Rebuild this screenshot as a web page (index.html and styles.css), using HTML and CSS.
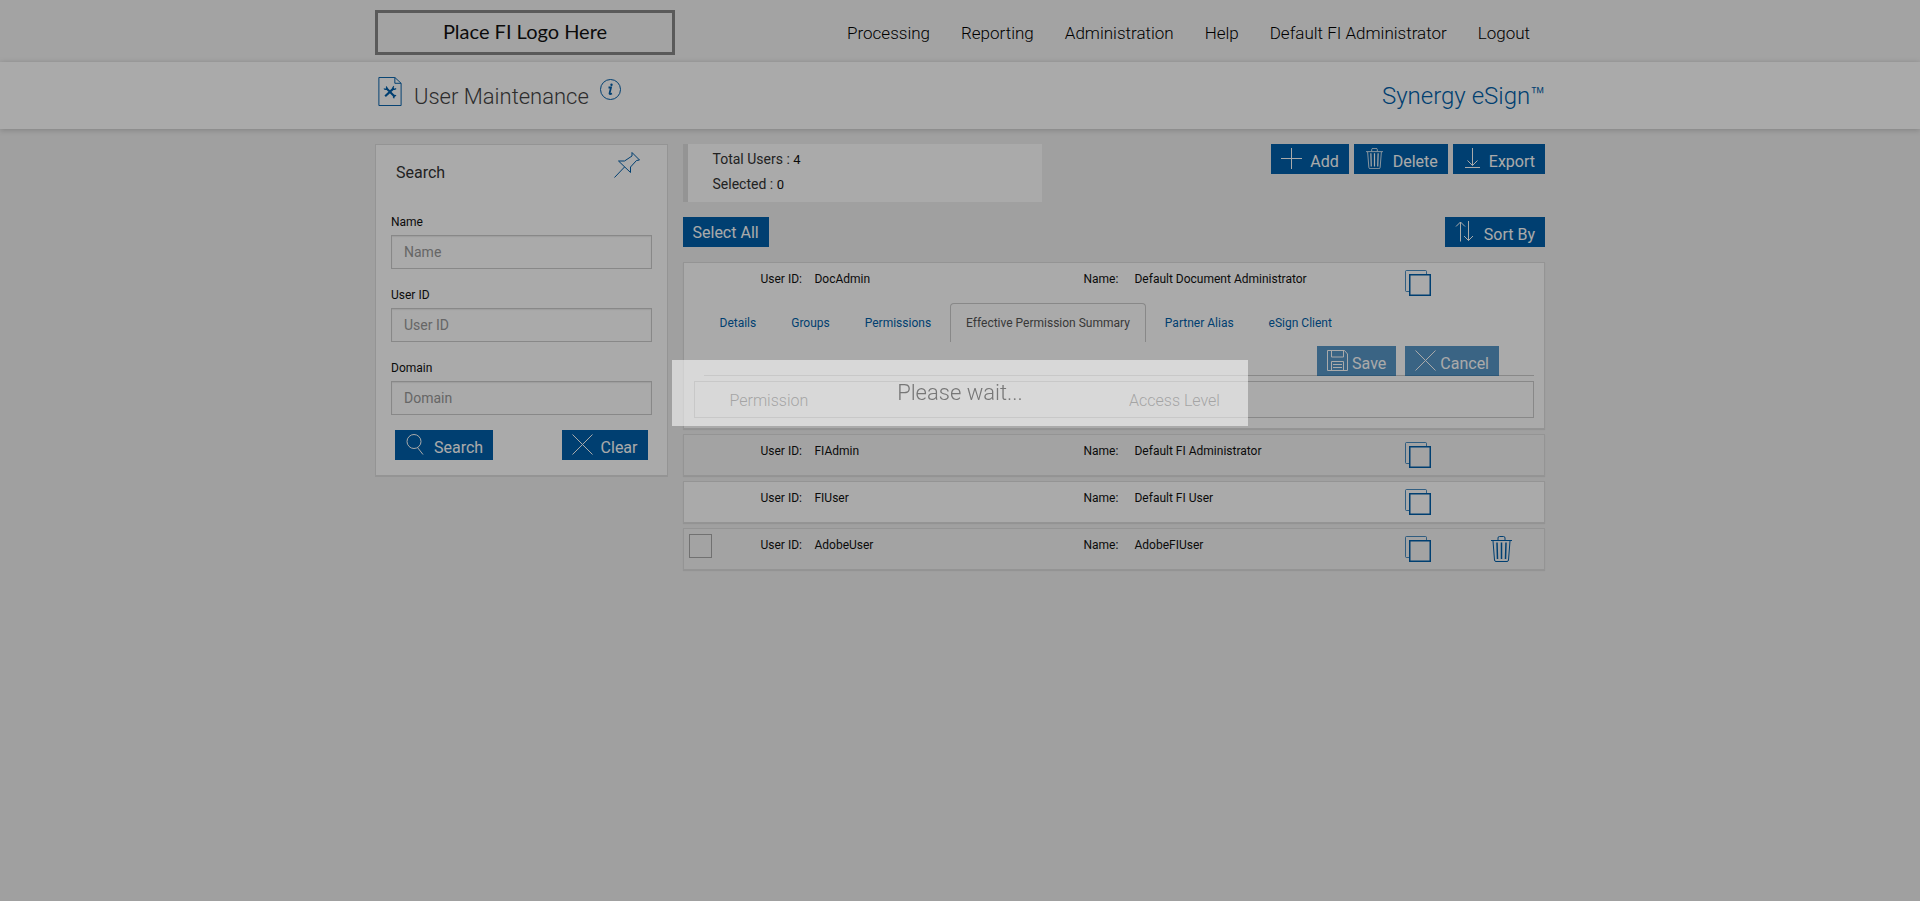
FILE: index.html
```html
<!DOCTYPE html>
<html lang="en">
<head>
    <meta charset="UTF-8">
    <title>User Maintenance</title>
    <link rel="stylesheet" href="styles.css">
</head>
<body>
    <!-- shared icons -->
    <svg class="sprite" aria-hidden="true">
        <symbol id="i-copy" viewBox="0 0 26 26">
            <path d="M4.500 21.500H1.500Q.5 21.500 .5 20.500V1.500Q.5 .5 1.500 .5H20.500Q21.500 .5 21.500 1.500V4" stroke-width="1" opacity=".7"/>
            <rect x="4.750" y="4.750" width="20.500" height="20.500" stroke-width="1.500"/>
        </symbol>
        <symbol id="i-trash" viewBox="0 0 21 26">
            <path d="M0 4.500H21M7 4V2Q7 .5 8.500 .5H12.500Q14 .5 14 2V4M2 5L3.500 24Q3.600 25.500 5 25.500H16Q17.400 25.500 17.500 24L19 5"/>
            <path d="M6 6.500L6.500 23M10.500 6.500V23M15 6.500L14.500 23" stroke-width="1.500"/>
        </symbol>
        <symbol id="i-close" viewBox="0 0 21 21">
            <path d="M.5 .5L20.500 20.500M20.500 .5L.5 20.500"/>
        </symbol>
    </svg>

    <header class="topbar">
        <div class="container topbar-inner">
            <div class="logo">Place FI Logo Here</div>
            <nav class="menu">
                <a href="#">Processing</a>
                <a href="#">Reporting</a>
                <a href="#">Administration</a>
                <a href="#">Help</a>
                <a href="#">Default FI Administrator</a>
                <a href="#">Logout</a>
            </nav>
        </div>
    </header>

    <div class="titlebar">
        <div class="container titlebar-inner">
            <svg class="icon doc-icon" viewBox="0 0 24 30">
                <path d="M.5 .5H17L23.500 6.500V29.500H.5ZM17 .5V6.500H23.500"/>
                <path d="M8 11.500L17 20.500M16 11.500L7 20" stroke-width="2.200"/>
                <path d="M5.800 11.800Q6.500 13.200 8.500 12.800Q9.300 11 8 9.800M18.300 12Q16.500 13.500 15 12.300Q14.600 10.500 16 9.500M18.300 19.500Q17 18.500 15.800 19.500Q15 21 16.500 22" stroke-width="1.300"/>
            </svg>
            <h1>User Maintenance</h1>
            <svg class="icon info-icon" viewBox="0 0 21 21">
                <circle cx="10.500" cy="10.500" r="10"/>
                <path d="M8.500 8.500H11L9.500 14.500Q9.500 15.500 12 14.500" stroke-width="1.800"/>
                <circle cx="11.500" cy="5.700" r=".6" stroke-width="1.200"/>
            </svg>
            <div class="product">Synergy eSign™</div>
        </div>
    </div>

    <main class="container page">
        <form class="search-panel">
            <div class="search-head">
                <h2>Search</h2>
                <svg class="icon pin-icon" viewBox="0 0 26 26">
                    <path d="M18 .5L25.500 8L22.500 8.500L16.500 15L16.500 20.500L4.500 9L10.500 9L18 4ZM10.500 15L.5 25.500"/>
                </svg>
            </div>
            <label for="name">Name</label>
            <input type="text" id="name" placeholder="Name">
            <label for="userid">User ID</label>
            <input type="text" id="userid" placeholder="User ID">
            <label for="domain">Domain</label>
            <input type="text" id="domain" placeholder="Domain">
            <div class="search-buttons">
                <button type="button" class="btn">
                    <svg viewBox="0 0 21 21"><circle cx="9" cy="7.500" r="7"/><path d="M12.500 13.500L18 20.500"/></svg>
                    <span>Search</span>
                </button>
                <button type="button" class="btn">
                    <svg viewBox="0 0 21 21"><use href="#i-close"/></svg>
                    <span>Clear</span>
                </button>
            </div>
        </form>

        <section class="content">
            <div class="toolbar">
                <div class="totals">
                    <p>Total Users : <span>4</span></p>
                    <p>Selected : <span>0</span></p>
                </div>
                <div class="actions">
                    <button type="button" class="btn">
                        <svg viewBox="0 0 21 21"><path d="M0 10.500H21M10.500 0V21"/></svg>
                        <span>Add</span>
                    </button>
                    <button type="button" class="btn">
                        <svg viewBox="0 0 21 21"><use href="#i-trash"/></svg>
                        <span>Delete</span>
                    </button>
                    <button type="button" class="btn btn-export">
                        <svg viewBox="0 0 18 21"><path d="M9.500 0V17.500M4.500 12.500L9.500 17.500L14.500 12.500M2 19.500H17"/></svg>
                        <span>Export</span>
                    </button>
                </div>
            </div>
            <div class="toolbar">
                <button type="button" class="btn btn-text">Select All</button>
                <button type="button" class="btn">
                    <svg viewBox="0 0 21 21"><path d="M5.500 20.500V1M1 5.500L5.500 1L10 5.500M13.500 0V19.500M9 15L13.500 19.500L18 15"/></svg>
                    <span>Sort By</span>
                </button>
            </div>

            <div class="user open">
                <div class="user-row">
                    <div class="cell-check"></div>
                    <div class="cell-id"><span>User ID:</span> DocAdmin</div>
                    <div class="cell-name"><span>Name:</span> Default Document Administrator</div>
                    <div class="cell-copy"><svg class="icon copy"><use href="#i-copy"/></svg></div>
                    <div class="cell-del"></div>
                </div>
                <div class="tabs">
                    <a href="#">Details</a>
                    <a href="#">Groups</a>
                    <a href="#">Permissions</a>
                    <a href="#" class="active">Effective Permission Summary</a>
                    <a href="#">Partner Alias</a>
                    <a href="#">eSign Client</a>
                </div>
                <div class="tab-buttons">
                    <button type="button" class="btn btn-tight" disabled>
                        <svg viewBox="0 0 21 21"><path d="M.5 .5H17.500L20.500 4V20.500H.5ZM4.500 .5V7H16.500V.5M4.500 20.500V11.500H16.500V20.500M6 14.500H15M6 17.500H15"/></svg>
                        <span>Save</span>
                    </button>
                    <button type="button" class="btn btn-tight" disabled>
                        <svg viewBox="0 0 21 21"><use href="#i-close"/></svg>
                        <span>Cancel</span>
                    </button>
                </div>
                <table class="permissions">
                    <tr>
                        <th>Permission</th>
                        <th>Access Level</th>
                    </tr>
                </table>
            </div>
            <div class="user alt">
                <div class="user-row">
                    <div class="cell-check"></div>
                    <div class="cell-id"><span>User ID:</span> FIAdmin</div>
                    <div class="cell-name"><span>Name:</span> Default FI Administrator</div>
                    <div class="cell-copy"><svg class="icon copy"><use href="#i-copy"/></svg></div>
                    <div class="cell-del"></div>
                </div>
            </div>
            <div class="user">
                <div class="user-row">
                    <div class="cell-check"></div>
                    <div class="cell-id"><span>User ID:</span> FIUser</div>
                    <div class="cell-name"><span>Name:</span> Default FI User</div>
                    <div class="cell-copy"><svg class="icon copy"><use href="#i-copy"/></svg></div>
                    <div class="cell-del"></div>
                </div>
            </div>
            <div class="user alt">
                <div class="user-row">
                    <div class="cell-check"><input type="checkbox" aria-label="Select AdobeUser"></div>
                    <div class="cell-id"><span>User ID:</span> AdobeUser</div>
                    <div class="cell-name"><span>Name:</span> AdobeFIUser</div>
                    <div class="cell-copy"><svg class="icon copy"><use href="#i-copy"/></svg></div>
                    <div class="cell-del"><svg class="icon trash"><use href="#i-trash"/></svg></div>
                </div>
            </div>
        </section>
    </main>

    <div class="overlay"></div>
    <div class="wait" role="status">Please wait...</div>
</body>
</html>
```

FILE: styles.css
```css
* {
    box-sizing: border-box;
}
body {
    margin: 0;
    background-color: #f0f0f0;
    color: #111;
    font-family: Roboto, Arial, sans-serif;
    font-size: 12px;
    line-height: 18px;
}
h1, h2, p {
    margin: 0;
}
a {
    text-decoration: none;
}
.sprite {
    display: none;
}
.container {
    max-width: 1170px;
    margin: 0 auto;
}
.icon {
    fill: none;
    stroke: #005faa;
    stroke-width: 1;
    flex: none;
}

/* header */
.topbar {
    background-color: #f5f5f5;
}
.topbar-inner {
    display: flex;
    justify-content: space-between;
    align-items: flex-start;
    height: 62px;
    padding-top: 10px;
}
.logo {
    width: 300px;
    height: 45px;
    border: 3px solid #888;
    font-family: Lato, sans-serif;
    font-size: 20px;
    line-height: 36px;
    text-align: center;
}
.menu {
    display: flex;
    gap: 31px;
    padding: 12px 15px 0 0;
}
.menu a {
    color: #000;
    font-size: 17px;
    line-height: 22px;
    font-weight: 300;
}
.titlebar {
    background-color: #fff;
    box-shadow: 0 1px 6px rgba(0,0,0,0.2);
}
.titlebar-inner {
    display: flex;
    align-items: flex-start;
    height: 67px;
    padding: 15px 0 0 3px;
}
.doc-icon {
    width: 24px;
    height: 29px;
}
.titlebar h1, .product {
    padding-top: 4px;
    font-size: 24px;
    line-height: 30px;
    font-weight: 300;
}
.titlebar h1 {
    margin: 0 11px 0 12px;
    color: #444;
    font-size: 22px;
    line-height: 32px;
}
.info-icon {
    width: 21px;
    height: 21px;
    margin-top: 2px;
}
.product {
    margin-left: auto;
    color: #005faa;
}

/* buttons */
.btn {
    display: flex;
    align-items: flex-start;
    gap: 8px;
    height: 30px;
    padding: 4px 10px;
    border: 0;
    background-color: #005faa;
    color: #fff;
    font-family: inherit;
    font-size: 16px;
    line-height: 22px;
}
.btn svg {
    width: 21px;
    height: 21px;
    fill: none;
    stroke: #fff;
    stroke-width: 1;
}
.btn span {
    padding-top: 3px;
}
.btn-text {
    line-height: 24px;
}
.btn-export svg {
    width: 18px;
}
.btn-tight {
    gap: 4px;
}
.btn:disabled {
    opacity: 0.65;
}

/* search */
.page {
    display: flex;
    align-items: flex-start;
    gap: 15px;
    padding-top: 15px;
}
.search-panel {
    width: 25%;
    padding: 7px 15px 15px;
    border: 1px solid #dedede;
    border-bottom-width: 2px;
    background-color: #fff;
}
.search-head {
    display: flex;
    justify-content: space-between;
    height: 59px;
    padding: 0 12px 0 5px;
}
.search-head h2 {
    padding-top: 10px;
    font-size: 16px;
    line-height: 22px;
    font-weight: 400;
    color: #333;
}
.pin-icon {
    width: 26px;
    height: 26px;
}
.search-panel label {
    display: block;
    margin-bottom: 4px;
    padding-top: 2px;
}
.search-panel input {
    display: block;
    width: 100%;
    height: 34px;
    margin-bottom: 15px;
    padding: 6px 12px;
    border: 1px solid #ccc;
    background-color: #fff;
    box-shadow: inset 0 1px 1px rgba(0,0,0,0.08);
    font-family: inherit;
    font-size: 14px;
}
.search-panel input::placeholder {
    color: #999;
}
.search-buttons {
    display: flex;
    justify-content: space-between;
    padding: 0 4px;
}

/* user list */
.content {
    flex: 1;
}
.toolbar {
    display: flex;
    justify-content: space-between;
    align-items: flex-start;
    margin-bottom: 15px;
}
.totals {
    width: 359px;
    height: 58px;
    padding: 3px 25px;
    border-left: 5px solid #dedede;
    background-color: #fff;
    color: #333;
    font-size: 14px;
    line-height: 24px;
}
.totals span {
    font-size: 13px;
    color: #111;
}
.actions {
    display: flex;
    gap: 5px;
}
.user {
    margin-bottom: 5px;
    border: 1px solid #dedede;
    background-color: #fff;
    box-shadow: 0 1px 1px rgba(0,0,0,0.08);
}
.user.alt {
    background-color: #f5f5f5;
}
.user-row {
    display: flex;
    align-items: flex-start;
    height: 40px;
    padding: 7px 0 0 5px;
}
.cell-check {
    width: 72px;
}
.cell-check input {
    appearance: none;
    display: block;
    width: 23px;
    height: 24px;
    margin: -2px 0 0;
    border: 1px solid #aaa;
}
.cell-id {
    width: 323px;
}
.cell-name {
    width: 321px;
}
.cell-id span, .cell-name span {
    display: inline-block;
    width: 51px;
}
.cell-name span {
    width: 48px;
}
.cell-copy {
    width: 86px;
}
.copy {
    display: block;
    width: 26px;
    height: 26px;
}
.trash {
    display: block;
    width: 21px;
    height: 26px;
}
.tabs {
    display: flex;
    gap: 3px;
    padding-left: 20px;
}
.tabs a {
    height: 39px;
    padding: 10px 15px;
    border: 1px solid transparent;
    border-bottom: 0;
    border-radius: 4px 4px 0 0;
    color: #005faa;
}
.tabs a.active {
    border-color: #ccc;
    color: #555;
}
.tab-buttons {
    display: flex;
    justify-content: flex-end;
    gap: 9px;
    margin: 4px 10px 5px 20px;
    padding-right: 35px;
    border-bottom: 1px solid #ccc;
}
.tab-buttons .btn {
    margin-bottom: -1px;
}
.permissions {
    width: calc(100% - 20px);
    margin: 0 10px 10px;
    border: 1px solid #ccc;
    border-collapse: collapse;
}
.permissions th {
    width: 400px;
    height: 36px;
    padding: 2px 0 0 35px;
    font-size: 16px;
    font-weight: 300;
    text-align: left;
    color: #555;
}
.permissions th + th {
    width: auto;
}

/* please wait */
.overlay {
    position: fixed;
    inset: 0;
    background-color: rgba(0,0,0,0.333);
}
.wait {
    position: fixed;
    top: 40%;
    left: 35%;
    width: 30%;
    padding: 18px;
    background-color: rgba(255,255,255,0.54);
    color: #777;
    font-size: 22px;
    line-height: 30px;
    font-weight: 300;
    text-align: center;
}
```
